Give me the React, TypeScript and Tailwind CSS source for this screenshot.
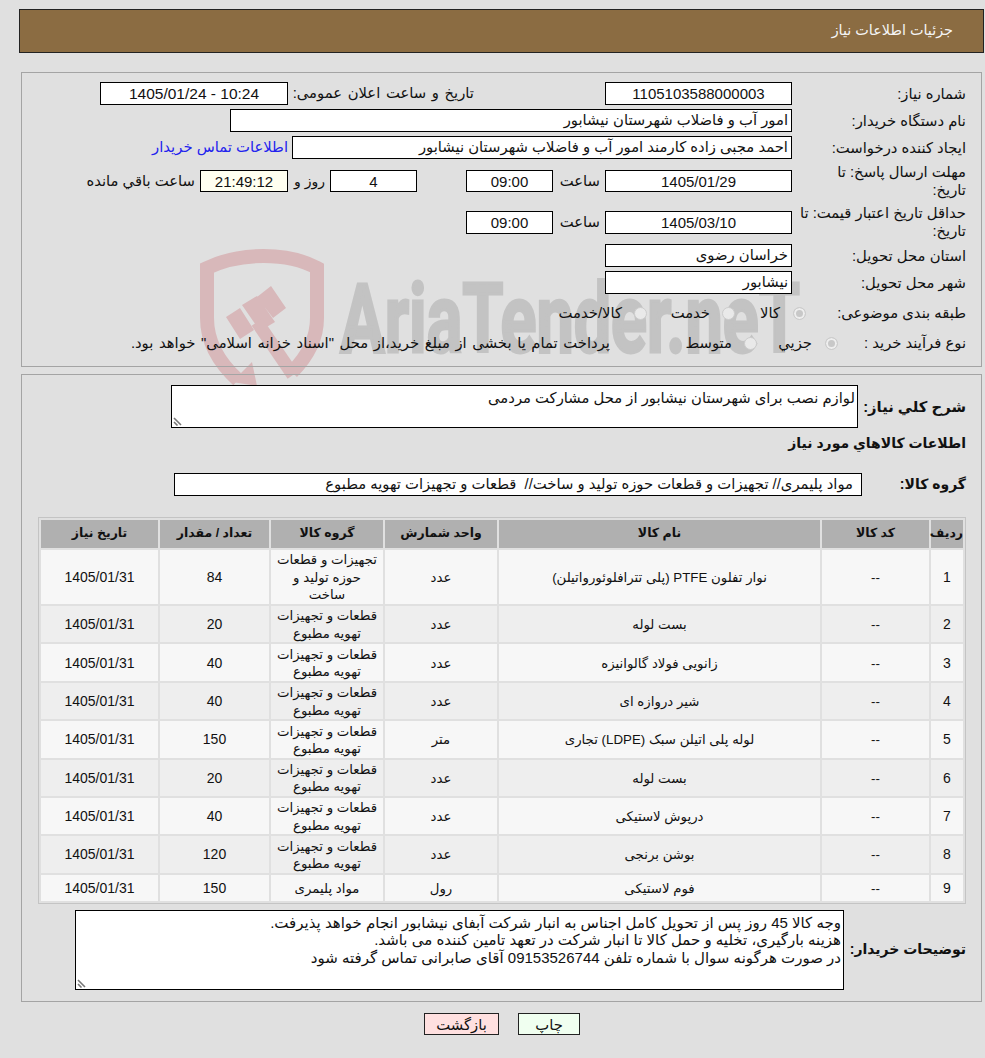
import type { ReactNode } from 'react';

const hvac = 'قطعات و تجهیزات\nتهویه مطبوع';

const items = [
  { id: 1, name: 'نوار تفلون PTFE (پلی تترافلوئورواتیلن)', unit: 'عدد', group: 'تجهیزات و قطعات\nحوزه تولید و\nساخت', qty: 84, h: 'h-[54px]' },
  { id: 2, name: 'بست لوله', unit: 'عدد', group: hvac, qty: 20, h: 'h-[36.4px]' },
  { id: 3, name: 'زانویی فولاد گالوانیزه', unit: 'عدد', group: hvac, qty: 40, h: 'h-[36.4px]' },
  { id: 4, name: 'شیر دروازه ای', unit: 'عدد', group: hvac, qty: 40, h: 'h-[36.4px]' },
  { id: 5, name: 'لوله پلی اتیلن سبک (LDPE) تجاری', unit: 'متر', group: hvac, qty: 150, h: 'h-[36.4px]' },
  { id: 6, name: 'بست لوله', unit: 'عدد', group: hvac, qty: 20, h: 'h-[36.4px]' },
  { id: 7, name: 'درپوش لاستیکی', unit: 'عدد', group: hvac, qty: 40, h: 'h-[36.4px]' },
  { id: 8, name: 'بوشن برنجی', unit: 'عدد', group: hvac, qty: 120, h: 'h-[36.4px]' },
  { id: 9, name: 'فوم لاستیکی', unit: 'رول', group: 'مواد پلیمری', qty: 150, h: 'h-[26px]' },
];

function Field({ className, children }: { className: string; children?: ReactNode }) {
  return <div className={`flex shrink-0 items-center border border-black bg-white leading-none ${className}`}>{children}</div>;
}

function Label({ children }: { children: ReactNode }) {
  return <div className="w-[174px] shrink-0 leading-[18px]">{children}</div>;
}

function Radio({ on }: { on?: boolean }) {
  return on ? (
    <span className="h-[13px] w-[13px] shrink-0 rounded-full border border-[#cccccc] bg-[#c8c8c8] shadow-[inset_0_0_0_2px_#eeeeee]" />
  ) : (
    <span className="h-[13px] w-[13px] shrink-0 rounded-full border border-[#cccccc] bg-[#e9e9e9]" />
  );
}

function Grip() {
  return (
    <svg className="absolute bottom-px left-px" width="11" height="11" viewBox="0 0 11 11" aria-hidden="true">
      <path d="M1 3l7 7M1 7l3.500 3.500" stroke="#777" strokeWidth="1.600" fill="none" />
    </svg>
  );
}

function Watermark() {
  return (
    <svg dir="ltr" className="absolute left-0 top-0" width="985" height="420" viewBox="0 0 985 420" aria-hidden="true">
      <path d="M238 380C216 360 207 340 207 318V268C240 252 288 252 317 268V318C317 340 306 358 292 372" fill="none" stroke="#d8b8ba" strokeWidth="14" />
      <path d="M232 382l20-20 5 24z" fill="#d8b8ba" />
      <path d="M226 317l14-9 14 22-14 9zM242 305l15-9 18 26-15 9zM257 297l14-11 15 22-13 10z" fill="#d8b8ba" />
      <path d="M257 322l36 53" stroke="#d8b8ba" strokeWidth="13" />
      <text x="340" y="352" textLength="460" lengthAdjust="spacingAndGlyphs" direction="ltr" fontFamily="Roboto, sans-serif" fontWeight="700" fontSize="96" fill="#c3c3c3" stroke="#c3c3c3" strokeWidth="3">
        AriaTender.neT
      </text>
    </svg>
  );
}

export default function App() {
  return (
    <div dir="rtl" className="relative h-[1058px] w-[985px] overflow-hidden bg-[#e0e0e0] [font-family:'Liberation_Sans','DejaVu_Sans',sans-serif] text-[14.8px] text-[#111]">
      <Watermark />
      <div className="relative pt-[9px]">
        <header className="mr-px flex h-[44px] w-[965px] items-center border border-[#222] bg-[#8b6c42] pr-[30px] text-[14.4px] text-[#f5f5f5]">
          جزئیات اطلاعات نیاز
        </header>

        {/* need details */}
        <section className="mr-[3px] mt-[19px] w-[961px] border border-[#a4a4a4] pb-[11px] pr-[15px] pt-[9px]">
          <div className="flex h-[23px] items-center">
            <Label>شماره نیاز:</Label>
            <Field className="h-[23px] w-[187px] justify-center text-[15px]">1105103588000003</Field>
            <div className="w-[317px] pr-[131px] [word-spacing:1.500px]">تاریخ و ساعت اعلان عمومی:</div>
            <Field className="h-[23px] w-[188px] justify-center text-[15.500px]">10:24 - 1405/01/24</Field>
          </div>
          <div className="mt-[4px] flex h-[23px] items-center">
            <Label>نام دستگاه خریدار:</Label>
            <Field className="h-[23px] w-[562px] pr-[3px]">امور آب و فاضلاب شهرستان نیشابور</Field>
          </div>
          <div className="mt-[4px] flex h-[23px] items-center">
            <Label>ایجاد کننده درخواست:</Label>
            <Field className="h-[23px] w-[500px] pr-[3px]">احمد مجبی زاده کارمند امور آب و فاضلاب شهرستان نیشابور</Field>
            <a className="mr-[4px] text-[#2222ee]">اطلاعات تماس خریدار</a>
          </div>
          <div className="mt-[4px] flex h-[36px] items-center">
            <Label>مهلت ارسال پاسخ: تا<br />تاریخ:</Label>
            <Field className="h-[22px] w-[187px] justify-center text-[15px]">1405/01/29</Field>
            <div className="w-[52px] pr-[5px]">ساعت</div>
            <Field className="h-[22px] w-[87px] justify-center text-[15px]">09:00</Field>
            <div className="w-[49px]" />
            <Field className="h-[22px] w-[87px] justify-center text-[15px]">4</Field>
            <div className="w-[42px] pr-[5px] text-[14px]">روز و</div>
            <Field className="h-[22px] w-[88px] justify-center !bg-[#fffff0] text-[15px]">21:49:12</Field>
            <div className="pr-[5px]">ساعت باقي مانده</div>
          </div>
          <div className="mt-[5px] flex h-[36px] items-center">
            <Label>حداقل تاریخ اعتبار قیمت: تا<br />تاریخ:</Label>
            <Field className="h-[23px] w-[187px] justify-center text-[15px]">1405/03/10</Field>
            <div className="w-[52px] pr-[5px]">ساعت</div>
            <Field className="h-[23px] w-[87px] justify-center text-[15px]">09:00</Field>
          </div>
          <div className="mt-[4px] flex h-[23px] items-center">
            <Label>استان محل تحویل:</Label>
            <Field className="h-[23px] w-[187px] pr-[3px]">خراسان رضوی</Field>
          </div>
          <div className="mt-[4px] flex h-[23px] items-center">
            <Label>شهر محل تحویل:</Label>
            <Field className="h-[23px] w-[187px] pr-[3px]">نیشابور</Field>
          </div>
          <div className="mt-[7px] flex h-[24px] items-center">
            <div className="w-[160px] shrink-0">طبقه بندی موضوعی:</div>
            <div className="flex w-[71px] items-center"><Radio on /><span className="pr-[13px]">کالا</span></div>
            <div className="flex w-[88px] items-center"><Radio /><span className="pr-[12px]">خدمت</span></div>
            <div className="flex items-center"><Radio /><span className="pr-[12px]">کالا/خدمت</span></div>
          </div>
          <div className="mt-[6px] flex h-[24px] items-center">
            <div className="w-[128px] shrink-0">نوع فرآیند خرید :</div>
            <div className="flex w-[81px] items-center"><Radio on /><span className="pr-[13px]">جزیي</span></div>
            <div className="flex w-[147px] items-center"><Radio /><span className="pr-[12px]">متوسط</span></div>
            <span className="[word-spacing:1.500px]">پرداخت تمام یا بخشی از مبلغ خرید،از محل "اسناد خزانه اسلامی" خواهد بود.</span>
          </div>
        </section>

        {/* goods */}
        <section className="mr-[3px] mt-[7px] h-[628px] w-[961px] border border-[#a4a4a4] pr-[15px] pt-[10px]">
          <div className="flex h-[43px] items-center">
            <div className="w-[108px] shrink-0 pt-[2px] font-bold">شرح كلي نياز:</div>
            <Field className="relative h-[43px] w-[687px] !items-start pr-[2px] pt-[5px]">
              لوازم نصب برای شهرستان نیشابور از محل مشارکت مردمی
              <Grip />
            </Field>
          </div>
          <div className="mt-[6px] text-[14px] font-bold leading-[18px]">اطلاعات كالاهاي مورد نياز</div>
          <div className="mt-[21px] flex h-[23px] items-center">
            <div className="w-[104px] shrink-0 text-[14px] font-bold">گروه کالا:</div>
            <Field className="h-[23px] w-[688px] whitespace-pre pr-[8px]">مواد پلیمری// تجهیزات و قطعات حوزه تولید و ساخت//  قطعات و تجهیزات تهویه مطبوع</Field>
          </div>
          <table className="mt-[21px] w-[928px] table-fixed border-separate border-spacing-[2px] border border-[#c4c4c4] text-center text-[13.3px] leading-[17.500px] [&_td]:pt-[1.400px]">
            <colgroup>
              <col className="w-[32px]" />
              <col className="w-[107px]" />
              <col className="w-[321px]" />
              <col className="w-[112px]" />
              <col className="w-[112px]" />
              <col className="w-[109px]" />
              <col className="w-[117px]" />
            </colgroup>
            <thead>
              <tr className="h-[28px] bg-[#b0b0b0] text-[12.500px] font-bold">
                <th>ردیف</th>
                <th>کد کالا</th>
                <th>نام کالا</th>
                <th>واحد شمارش</th>
                <th>گروه کالا</th>
                <th>تعداد / مقدار</th>
                <th>تاریخ نیاز</th>
              </tr>
            </thead>
            <tbody>
              {items.map((row) => (
                <tr key={row.id} className={`${row.h} ${row.id % 2 ? 'bg-[#f7f7f7]' : 'bg-[#eeeeee]'}`}>
                  <td className="text-[14px]">{row.id}</td>
                  <td>--</td>
                  <td>{row.name}</td>
                  <td>{row.unit}</td>
                  <td className="whitespace-pre">{row.group}</td>
                  <td className="text-[14px]">{row.qty}</td>
                  <td className="text-[14px]">1405/01/31</td>
                </tr>
              ))}
            </tbody>
          </table>
          <div className="mt-[6px] flex h-[80px] items-center">
            <div className="w-[122px] shrink-0 text-[14px] font-bold">توضیحات خریدار:</div>
            <div className="relative h-[80px] w-[769px] shrink-0 border border-black bg-white pr-[2px] pt-[3px] text-[15px] leading-[17.500px]">
              <div>وجه کالا 45 روز پس از تحویل کامل اجناس به انبار شرکت آبفای نیشابور انجام خواهد پذیرفت.</div>
              <div>هزینه بارگیری، تخلیه و حمل کالا تا انبار شرکت در تعهد تامین کننده می باشد.</div>
              <div>در صورت هرگونه سوال با شماره تلفن 09153526744 آقای صابرانی تماس گرفته شود</div>
              <Grip />
            </div>
          </div>
        </section>

        <div className="mr-[405px] mt-[11px] flex gap-[19px]">
          <button className="h-[22px] w-[62px] border border-[#222] bg-[#f0fff0]">چاپ</button>
          <button className="h-[22px] w-[75px] border border-[#222] bg-[#ffe0e0]">بازگشت</button>
        </div>
      </div>
    </div>
  );
}
